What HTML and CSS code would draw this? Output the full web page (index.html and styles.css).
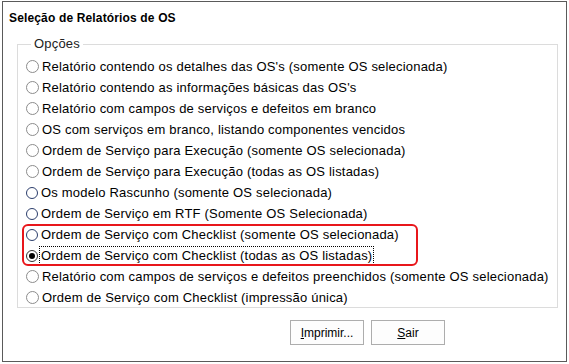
FILE: index.html
```html
<!DOCTYPE html>
<html lang="pt-BR">
<head>
<meta charset="utf-8">
<title>Seleção de Relatórios de OS</title>
<link rel="stylesheet" href="styles.css">
</head>
<body>
<div class="window">
  <div class="title">Seleção de Relatórios de OS</div>
  <fieldset class="group">
    <legend class="legend">Opções</legend>
    <div class="options">
      <div class="opt"><span class="radio"></span><span class="label">Relatório contendo os detalhes das OS's (somente OS selecionada)</span></div>
      <div class="opt"><span class="radio"></span><span class="label">Relatório contendo as informações básicas das OS's</span></div>
      <div class="opt"><span class="radio"></span><span class="label">Relatório com campos de serviços e defeitos em branco</span></div>
      <div class="opt"><span class="radio"></span><span class="label">OS com serviços em branco, listando componentes vencidos</span></div>
      <div class="opt"><span class="radio"></span><span class="label">Ordem de Serviço para Execução (somente OS selecionada)</span></div>
      <div class="opt"><span class="radio"></span><span class="label">Ordem de Serviço para Execução (todas as OS listadas)</span></div>
      <div class="opt"><span class="radio dark"></span><span class="label">Os modelo Rascunho (somente OS selecionada)</span></div>
      <div class="opt"><span class="radio dark"></span><span class="label">Ordem de Serviço em RTF (Somente OS Selecionada)</span></div>
      <div class="opt"><span class="radio dark"></span><span class="label">Ordem de Serviço com Checklist (somente OS selecionada)</span></div>
      <div class="opt"><span class="radio checked"></span><span class="label focus">Ordem de Serviço com Checklist (todas as OS listadas)</span></div>
      <div class="opt"><span class="radio"></span><span class="label">Relatório com campos de serviços e defeitos preenchidos (somente OS selecionada)</span></div>
      <div class="opt"><span class="radio"></span><span class="label">Ordem de Serviço com Checklist (impressão única)</span></div>
    </div>
    <div class="highlight"></div>
  </fieldset>
  <div class="buttons">
    <button class="btn"><u>I</u>mprimir...</button>
    <button class="btn"><u>S</u>air</button>
  </div>
</div>
</body>
</html>
```

FILE: styles.css
```css
html, body {
  margin: 0;
  padding: 0;
  background: #ffffff;
}
body {
  padding: 1px 0 0 2px;
  font-family: "Liberation Sans", Arial, sans-serif;
  color: #000;
}
.window {
  width: 563px;
  height: 359px;
  border: 1px solid #5a5a5a;
  background: #fff;
  position: relative;
}
.title {
  font-weight: bold;
  font-size: 12px;
  letter-spacing: 0.15px;
  line-height: 14px;
  padding: 9px 0 0 6px;
  height: 20px;
}
.group {
  position: relative;
  margin: 6px 0 0 14px;
  width: 541px;
  height: 271px;
  box-sizing: border-box;
  border: 1px solid #dcdcdc;
  padding: 5px 0 0 8px;
}
.legend {
  font-size: 13px;
  letter-spacing: 0.2px;
  line-height: 14px;
  padding: 0 3px;
  margin-left: 5px;
  color: #222;
}
.options {
  display: flex;
  flex-direction: column;
}
.opt {
  display: flex;
  align-items: center;
  height: 21px;
  font-size: 13px;
  letter-spacing: 0.2px;
}
.radio {
  width: 11px;
  height: 11px;
  border: 1px solid #8c8c8c;
  border-radius: 50%;
  box-sizing: content-box;
  margin-right: 1px;
  flex: none;
  display: flex;
  align-items: center;
  justify-content: center;
}
.radio.dark {
  border: 1.5px solid #2c3e6c;
  width: 10px;
  height: 10px;
}
.radio.checked {
  border: 1.5px solid #333;
  width: 10px;
  height: 10px;
}
.radio.checked::after {
  content: "";
  width: 6px;
  height: 6px;
  border-radius: 50%;
  background: #000;
}
.label {
  padding: 1px 1px;
  border: 1px dotted transparent;
  line-height: 15px;
}
.label.focus {
  border-color: #000;
}
.highlight {
  position: absolute;
  left: 4px;
  top: 173px;
  width: 392px;
  height: 38px;
  border: 2px solid #e8161b;
  border-radius: 6px;
  pointer-events: none;
}
.buttons {
  display: flex;
  justify-content: flex-end;
  gap: 7px;
  padding: 12px 121px 0 0;
}
.btn {
  width: 74px;
  height: 25px;
  background: #fdfdfd;
  border: 1px solid #adadad;
  font-family: "Liberation Sans", Arial, sans-serif;
  font-size: 12px;
  color: #000;
  padding: 0;
}
```
